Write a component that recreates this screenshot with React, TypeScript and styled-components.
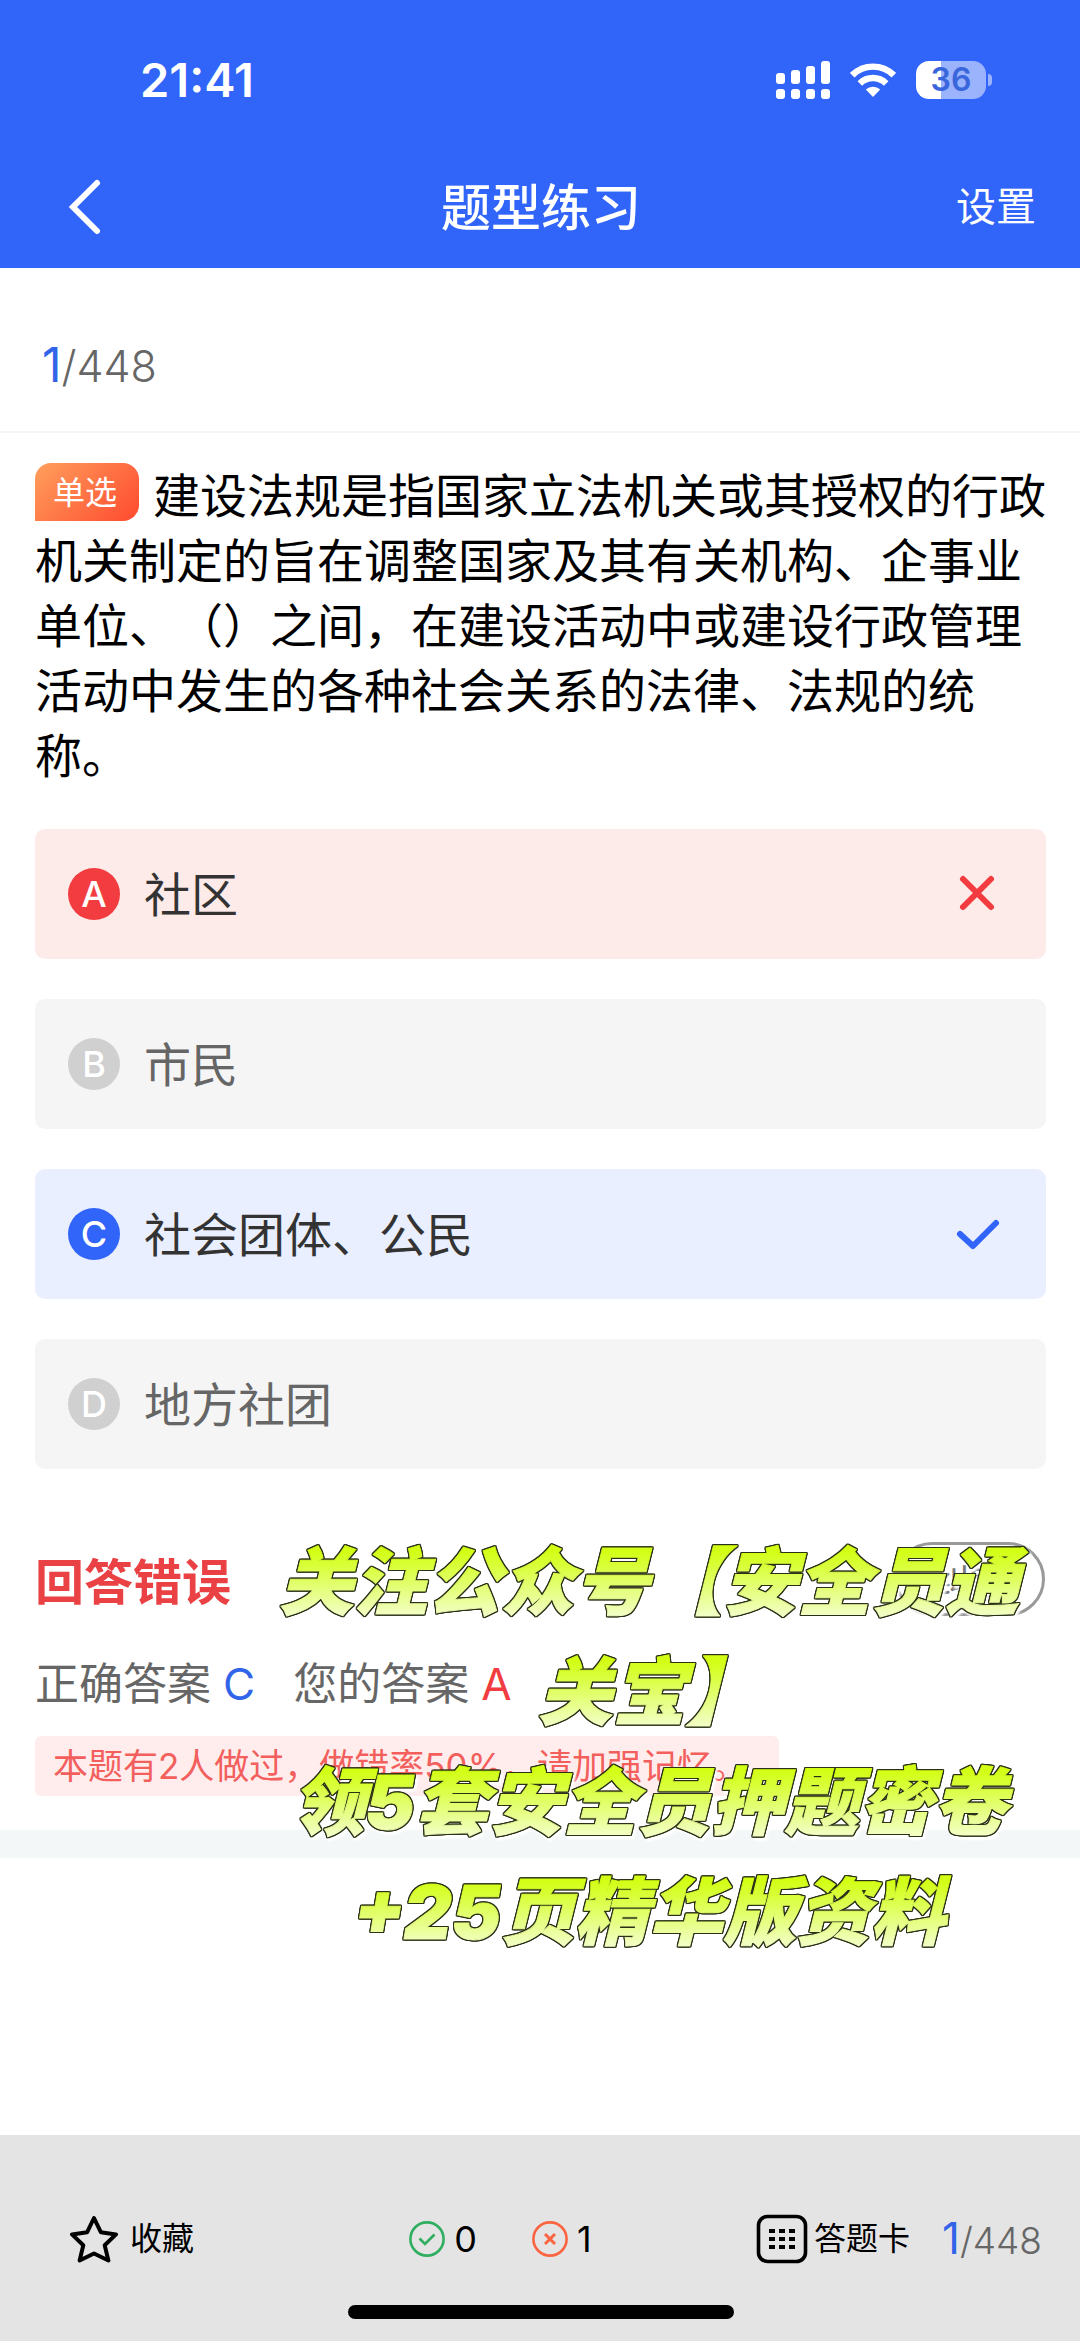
import React from 'react';
import styled, { createGlobalStyle } from 'styled-components';

const cjk = '"Noto Sans CJK SC", sans-serif';
const latin = `Inter, ${cjk}`;

const GlobalStyle = createGlobalStyle`
  *, *::before, *::after { box-sizing: border-box; }
  body { margin: 0; background: #fff; font-family: ${latin}; color: #000; text-spacing-trim: space-all; }
  button { font: inherit; color: inherit; background: none; border: 0; padding: 0; cursor: pointer; }
  h1, h2, p, ul { margin: 0; padding: 0; }
  svg { display: block; flex: none; }
`;

const Page = styled.div`
  min-height: 100vh;
  display: flex;
  flex-direction: column;
`;

const Header = styled.header`
  background: #3164f8;
  color: #fff;
`;

const StatusBar = styled.div`
  height: 148px;
  padding: 12px 88px 0 140px;
  display: flex;
  align-items: center;
  justify-content: space-between;
`;

const Clock = styled.time`
  font-size: 47px;
  line-height: 56px;
  font-weight: 600;
`;

const StatusIcons = styled.div`
  display: flex;
  align-items: center;
  gap: 20px;
`;

const Battery = styled.div`
  display: flex;
  align-items: center;
  gap: 2px;
`;

const BatteryCell = styled.span`
  width: 70px;
  height: 38px;
  border-radius: 13px;
  background: linear-gradient(90deg, #fff 36%, #9bb2fc 36%);
  color: #3a66dc;
  font-size: 32px;
  line-height: 38px;
  font-weight: 600;
  text-align: center;
`;

const BatteryTip = styled.span`
  width: 4px;
  height: 12px;
  border-radius: 0 4px 4px 0;
  background: #9bb2fc;
`;

const NavBar = styled.div`
  height: 120px;
  padding: 0 44px 8px 46px;
  display: grid;
  grid-template-columns: 1fr auto 1fr;
  align-items: center;
`;

const BackButton = styled.button`
  justify-self: start;
`;

const Title = styled.h1`
  font-family: ${cjk};
  font-size: 50px;
  line-height: 64px;
  font-weight: 500;
`;

const SettingsButton = styled.button`
  && { font-family: ${cjk}; font-size: 40px; }
  line-height: 56px;
  justify-self: end;
`;

const Progress = styled.div<{ $small?: boolean }>`
  display: flex;
  align-items: baseline;
  font-size: ${(p) => (p.$small ? 37 : 43)}px;
  line-height: 56px;
  font-weight: 300;
  color: #666;
  strong {
    font-size: ${(p) => (p.$small ? 44 : 48)}px;
    font-weight: 400;
    color: #3164e8;
  }
`;

const ProgressRow = styled.div`
  height: 165px;
  padding: 32px 42px 0;
  display: flex;
  align-items: center;
  border-bottom: 2px solid #f5f5f5;
`;

const Main = styled.main`
  flex: 1;
`;

const Question = styled.p`
  && { padding: 27px 32px 0 35px; }
  font-family: ${cjk};
  font-size: 47px;
  line-height: 65px;
`;

const Tag = styled.span`
  display: inline-block;
  width: 104px;
  height: 58px;
  margin: 3px 14px 0 0;
  padding-right: 4px;
  border-radius: 16px 16px 16px 0;
  background: linear-gradient(135deg, #ff9f5c, #ff4a2f);
  color: #fff;
  font-size: 32px;
  line-height: 54px;
  text-align: center;
  vertical-align: top;
`;

const Options = styled.ul`
  && { padding: 44px 34px 0 35px; }
  list-style: none;
  display: grid;
  gap: 40px;
`;

type Tone = 'wrong' | 'right' | 'idle';
const tones = {
  wrong: { bg: '#fdebe9', badge: '#f23c3f', text: '#333' },
  right: { bg: '#e9effe', badge: '#3164f8', text: '#333' },
  idle: { bg: '#f5f5f5', badge: '#d0d0d0', text: '#666' },
};

const OptionButton = styled.button<{ $tone: Tone }>`
  && { color: ${(p) => tones[p.$tone].text}; font-family: ${cjk}; font-size: 47px; }
  && { background: ${(p) => tones[p.$tone].bg}; padding: 0 44px 0 33px; }
  width: 100%;
  height: 130px;
  border-radius: 10px;
  display: flex;
  align-items: center;
  gap: 24px;
  text-align: left;
`;

const Letter = styled.span<{ $tone: Tone }>`
  width: 52px;
  height: 52px;
  border-radius: 50%;
  background: ${(p) => tones[p.$tone].badge};
  color: #fff;
  font-family: ${latin};
  font-size: 36px;
  line-height: 52px;
  font-weight: 500;
  text-align: center;
`;

const OptionText = styled.span`
  flex: 1;
  padding-bottom: 4px;
  line-height: 64px;
`;

const Result = styled.section`
  position: relative;
  padding: 78px 35px 34px;
  border-bottom: 28px solid #f3f7f8;
`;

const ResultHead = styled.div`
  height: 64px;
  display: flex;
  align-items: center;
  justify-content: space-between;
`;

const Verdict = styled.h2`
  font-family: ${cjk};
  font-size: 49px;
  line-height: 64px;
  font-weight: 700;
  color: #e94144;
`;

const FixButton = styled.button`
  && { border: 3px solid #999; color: #777; font-family: ${cjk}; font-size: 36px; }
  width: 150px;
  height: 74px;
  border-radius: 37px;
`;

const Answers = styled.div`
  margin-top: 38px;
  display: flex;
  gap: 38px;
  font-size: 44px;
  line-height: 64px;
  color: #666;
`;

const Answer = styled.span<{ $color: string }>`
  display: flex;
  align-items: baseline;
  gap: 12px;
  font-family: ${cjk};
  b {
    font-family: ${latin};
    font-weight: 400;
    color: ${(p) => p.$color};
  }
`;

const Note = styled.p`
  && { padding: 0 32px 0 18px; margin-top: 20px; }
  width: fit-content;
  border-radius: 6px;
  background: #ffeded;
  color: #f25f5c;
  font-size: 35px;
  line-height: 60px;
`;

const Promo = styled.p`
  position: absolute;
  top: 58px;
  left: 266px;
  right: 48px;
  font-family: ${latin};
  font-size: 74px;
  line-height: 110px;
  font-weight: 900;
  font-style: italic;
  text-align: center;
  white-space: nowrap;
  color: transparent;
  background: repeating-linear-gradient(180deg, #d2ff14 0 24px, #d9ff3c 40px, #f2ffc4 88px, #f2ffc4 110px);
  background-clip: text;
  -webkit-background-clip: text;
  -webkit-text-stroke: 1px transparent;
  filter:
    drop-shadow(1px 0 0 #2b3016)
    drop-shadow(-1px 0 0 #2b3016)
    drop-shadow(0 1px 0 #2b3016)
    drop-shadow(0 -1px 0 #2b3016)
    drop-shadow(2px 3px 1px #fff);
  pointer-events: none;
`;

const Footer = styled.footer`
  height: 206px;
  padding: 68px 38px 22px 70px;
  background: #e4e4e4;
  display: flex;
  flex-direction: column;
  justify-content: space-between;
`;

const Tools = styled.div`
  height: 72px;
  display: flex;
  align-items: center;
  justify-content: space-between;
`;

const ToolButton = styled.button<{ $gap: number }>`
  && { font-family: ${cjk}; font-size: 32px; }
  display: flex;
  align-items: center;
  gap: ${(p) => p.$gap}px;
  line-height: 48px;
`;

const ToolLabel = styled.span`
  padding-bottom: 6px;
`;

const Counts = styled.div`
  margin-left: 50px;
  display: flex;
  gap: 54px;
`;

const Count = styled.span`
  display: flex;
  align-items: center;
  gap: 8px;
  font-size: 36px;
  line-height: 48px;
`;

const SheetGroup = styled.div`
  display: flex;
  align-items: center;
  gap: 32px;
`;

const HomeIndicator = styled.div`
  align-self: center;
  width: 386px;
  height: 14px;
  margin-right: 30px;
  border-radius: 7px;
  background: #000;
`;

const Signal = () => (
  <svg width="54" height="38" viewBox="0 0 54 38" fill="#fff" aria-hidden="true">
    {[12, 9, 5, 0].map((y, i) => (
      <React.Fragment key={i}>
        <rect x={i * 15} y={y} width="9" height={23 - y} rx="3" />
        <rect x={i * 15} y="28" width="9" height="10" rx="3" />
      </React.Fragment>
    ))}
  </svg>
);

const Wifi = () => (
  <svg width="46" height="34" viewBox="0 0 46 34" aria-hidden="true">
    <g fill="none" stroke="#fff" strokeWidth="6.4">
      <path d="M2.2 12.2a29.500 29.500 0 0 1 41.600 0" />
      <path d="M9.800 20.400a18.700 18.700 0 0 1 26.400 0" />
    </g>
    <path fill="#fff" d="M23 34l-7.200-7.400a10.300 10.300 0 0 1 14.400 0z" />
  </svg>
);

const Back = () => (
  <svg width="76" height="66" viewBox="0 0 76 66" fill="none" stroke="#fff" strokeWidth="6" strokeLinecap="round" aria-hidden="true">
    <path d="M51 12L27 36l24 24" />
  </svg>
);

const Cross = () => (
  <svg width="50" height="50" viewBox="0 0 50 50" fill="none" stroke="#f23c3f" strokeWidth="6" strokeLinecap="round" aria-hidden="true">
    <path d="M11 10l28 28M39 10L11 38" />
  </svg>
);

const Check = () => (
  <svg width="50" height="50" viewBox="0 0 50 50" fill="none" stroke="#3164f8" strokeWidth="6" strokeLinecap="round" strokeLinejoin="round" aria-hidden="true">
    <path d="M8 25l13 12L44 14" />
  </svg>
);

const Star = () => (
  <svg width="48" height="48" viewBox="0 0 48 48" fill="none" stroke="#000" strokeWidth="4" strokeLinejoin="round" aria-hidden="true">
    <path d="M24 3l6.800 14.200L46 19.400 34.700 30.300 38.400 45.500 24 38.500 9.600 45.500 13.300 30.300 2 19.400l15.200-2.200z" />
  </svg>
);

const Mark = ({ ok }: { ok?: boolean }) => (
  <svg width="38" height="38" viewBox="0 0 38 38" fill="none" stroke={ok ? '#2fae60' : '#fb6440'} strokeWidth="2.600" aria-hidden="true">
    <circle cx="19" cy="19" r="16.600" />
    {ok ? <path d="M11.500 18.500l5.500 5.500 9.500-9.500" /> : <path d="M14 14l10 10M24 14L14 24" strokeWidth="3" />}
  </svg>
);

const Sheet = () => (
  <svg width="52" height="50" viewBox="0 0 52 50" aria-hidden="true">
    <rect x="2.500" y="2.500" width="47" height="45" rx="9" fill="none" stroke="#000" strokeWidth="3.600" />
    {[15, 23, 31].map((y) => [13, 23, 33].map((x) => <rect key={`${x}-${y}`} x={x} y={y} width="6" height="4" />))}
  </svg>
);

const options: { letter: string; text: string; tone: Tone }[] = [
  { letter: 'A', text: '社区', tone: 'wrong' },
  { letter: 'B', text: '市民', tone: 'idle' },
  { letter: 'C', text: '社会团体、公民', tone: 'right' },
  { letter: 'D', text: '地方社团', tone: 'idle' },
];

export default function App() {
  return (
    <Page>
      <GlobalStyle />
      <Header>
        <StatusBar>
          <Clock>21:41</Clock>
          <StatusIcons>
            <Signal />
            <Wifi />
            <Battery>
              <BatteryCell>36</BatteryCell>
              <BatteryTip />
            </Battery>
          </StatusIcons>
        </StatusBar>
        <NavBar>
          <BackButton aria-label="返回"><Back /></BackButton>
          <Title>题型练习</Title>
          <SettingsButton>设置</SettingsButton>
        </NavBar>
      </Header>
      <Main>
        <ProgressRow>
          <Progress><strong>1</strong>/448</Progress>
        </ProgressRow>
        <Question>
          <Tag>单选</Tag>
          建设法规是指国家立法机关或其授权的行政机关制定的旨在调整国家及其有关机构、企事业单位、（）之间，在建设活动中或建设行政管理活动中发生的各种社会关系的法律、法规的统称。
        </Question>
        <Options>
          {options.map((o) => (
            <li key={o.letter}>
              <OptionButton $tone={o.tone}>
                <Letter $tone={o.tone}>{o.letter}</Letter>
                <OptionText>{o.text}</OptionText>
                {o.tone === 'wrong' && <Cross />}
                {o.tone === 'right' && <Check />}
              </OptionButton>
            </li>
          ))}
        </Options>
        <Result>
          <ResultHead>
            <Verdict>回答错误</Verdict>
            <FixButton>纠错</FixButton>
          </ResultHead>
          <Answers>
            <Answer $color="#3164e8">正确答案<b>C</b></Answer>
            <Answer $color="#f23c3f">您的答案<b>A</b></Answer>
          </Answers>
          <Note>本题有2人做过，做错率50%，请加强记忆。</Note>
          <Promo>
            关注公众号【安全员通<br />关宝】<br />领5套安全员押题密卷<br />+25页精华版资料
          </Promo>
        </Result>
      </Main>
      <Footer>
        <Tools>
          <ToolButton $gap={12}><Star /><ToolLabel>收藏</ToolLabel></ToolButton>
          <Counts>
            <Count><Mark ok />0</Count>
            <Count><Mark />1</Count>
          </Counts>
          <SheetGroup>
            <ToolButton $gap={6}><Sheet /><ToolLabel>答题卡</ToolLabel></ToolButton>
            <Progress $small><strong>1</strong>/448</Progress>
          </SheetGroup>
        </Tools>
        <HomeIndicator />
      </Footer>
    </Page>
  );
}
